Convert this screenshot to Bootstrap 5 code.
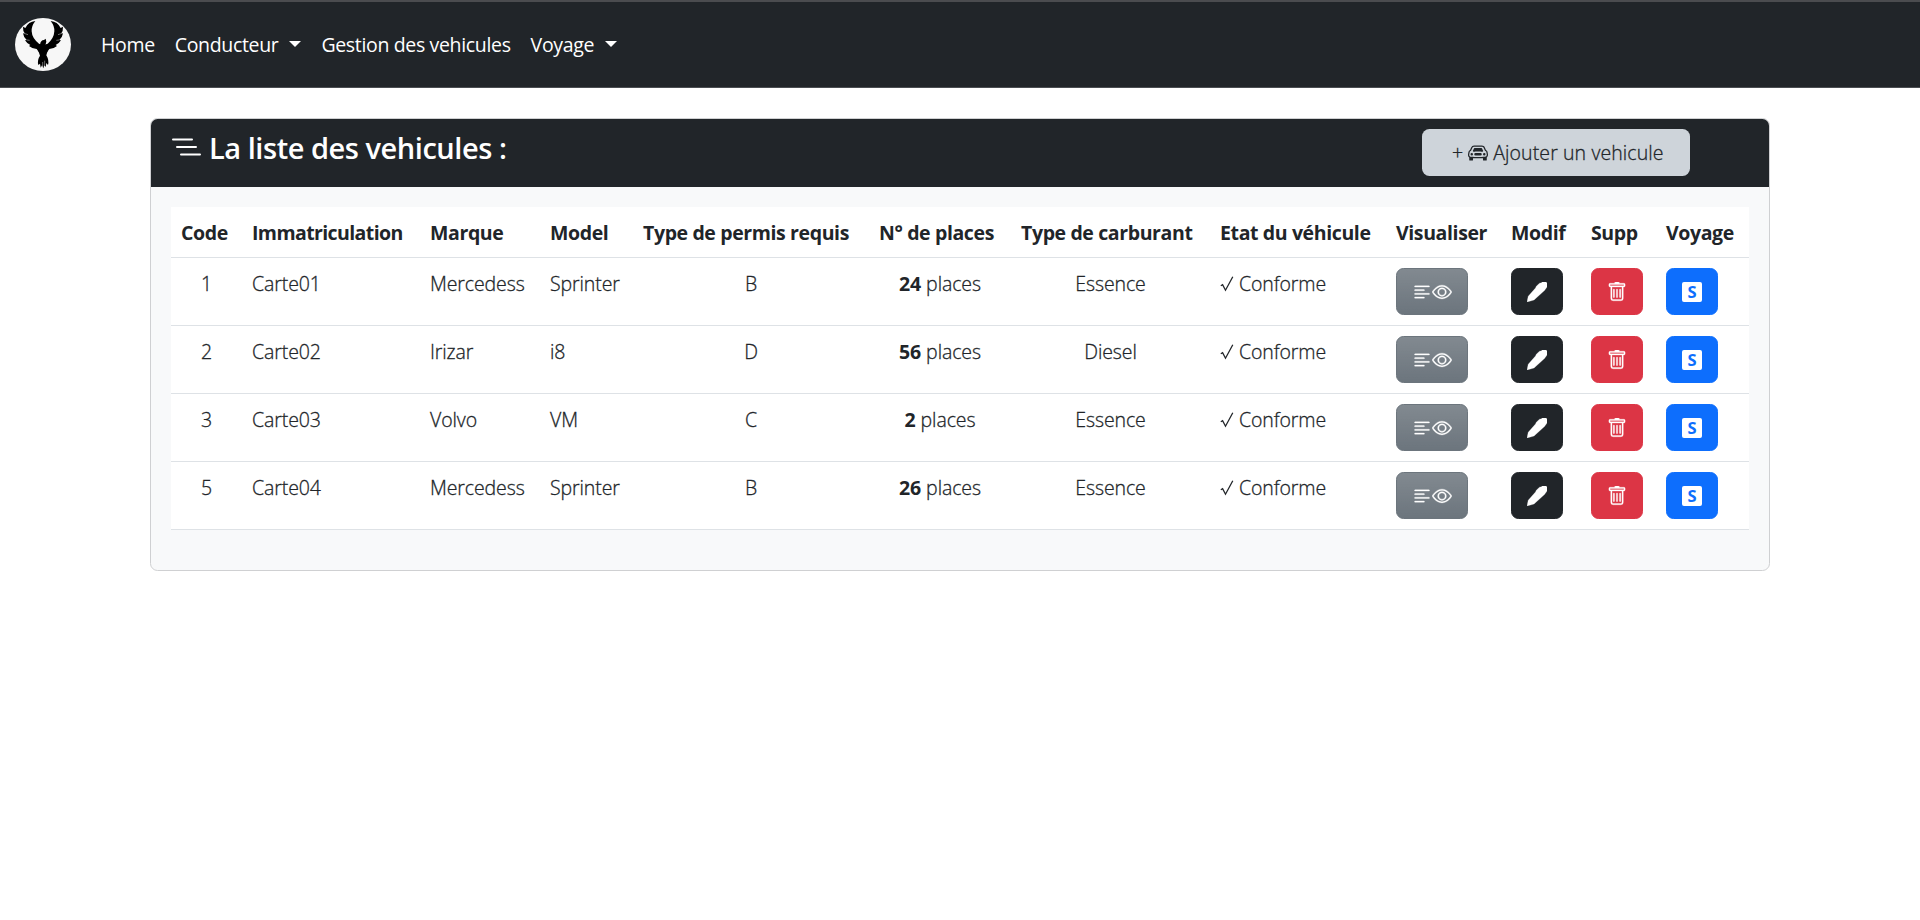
<!DOCTYPE html>
<html lang="fr">
<head>
<meta charset="utf-8">
<title>Gestion des vehicules</title>
<link href="https://cdn.jsdelivr.net/npm/bootstrap@5.3.0/dist/css/bootstrap.min.css" rel="stylesheet">
<style>
  html { font-size: 20px; }
  body { font-family: "Open Sans", "Noto Sans", sans-serif; font-size: 19.5px; line-height: 30px; background: #fff; }
  svg { display: block; flex: none; }
  .topbar { height: 88px; padding: 0 0 0 15px; border-top: 2px solid #4b4c4f; border-bottom: 1px solid #4b4e52; }
  .topbar .nav-link { padding: 10px; color: #fff; letter-spacing: -.34px; white-space: nowrap; }
  .topbar .navbar-nav { margin-left: 20px; }
  .topbar .dropdown-toggle::after { margin-left: 11px; vertical-align: 5px; border-top-width: 6px; border-left-width: 6px; border-right-width: 6px; }
  .vehicles { width: 1620px; margin: 30px auto 0; border-color: #cfd0d2; border-radius: 7.5px; background: #f8f9fa; }
  .vehicles .card-header { height: 68px; padding: 10px 20px; border-radius: 6.5px 6.5px 0 0; }
  .vehicles .card-body { padding: 20px 20px 40px; }
  .heading { font-size: 29px; line-height: 36px; font-weight: 600; letter-spacing: -.46px; padding-top: 1px; }
  .heading svg { margin: 8px 7px 0 0; }
  .add-btn { width: 268px; height: 47px; margin-right: 59px; padding: 0 0 0 30px; background: #ced4da; color: #212529; border-radius: 7.5px; font-size: 19.5px; font-weight: 300; letter-spacing: .1px; -webkit-text-stroke: .3px; }
  .list { --bs-table-bg: #fff; table-layout: fixed; width: 1578px; font-weight: 300; letter-spacing: -.1px; -webkit-text-stroke: .3px #212529; }
  .list > * > tr > * { padding: 11px 0 9px 10px; white-space: nowrap; border-color: #dee2e6; }
  .list th { font-weight: 700; letter-spacing: -.38px; -webkit-text-stroke: 0; }
  .list th:nth-child(2) { letter-spacing: -.6px; }
  .list td.mid { text-align: center; padding-left: 0; }
  .list td.act { padding-top: 10px; padding-bottom: 10px; -webkit-text-stroke: 0; }
  .list .btn { height: 47px; padding: 0 15px; border-radius: 7.5px; display: inline-flex; align-items: center; vertical-align: top; }
  .list .btn svg { stroke: currentColor; stroke-width: .25px; }
  .list .s-box { width: 20px; height: 20px; border-radius: 2px; background: #fff; color: #0d6efd; font-size: 16.5px; line-height: 20px; font-weight: 700; letter-spacing: 0; text-align: center; }
  .list b { font-weight: 700; -webkit-text-stroke: 0; }
</style>
</head>
<body>
<svg width="0" height="0" class="position-absolute" aria-hidden="true">
  <symbol id="i-lines" viewBox="0 0 16 16"><path d="M2 12.500a.5.5 0 0 1 .5-.5h7a.5.5 0 0 1 0 1h-7a.5.5 0 0 1-.5-.5m0-3a.5.5 0 0 1 .5-.5h11a.5.5 0 0 1 0 1h-11a.5.5 0 0 1-.5-.5m0-3a.5.5 0 0 1 .5-.5h7a.5.5 0 0 1 0 1h-7a.5.5 0 0 1-.5-.5m0-3a.5.5 0 0 1 .5-.5h11a.5.5 0 0 1 0 1h-11a.5.5 0 0 1-.5-.5"/></symbol>
  <symbol id="i-eye" viewBox="0 0 16 16"><path d="M16 8s-3-5.500-8-5.500S0 8 0 8s3 5.500 8 5.500S16 8 16 8M1.173 8a13 13 0 0 1 1.660-2.043C4.120 4.668 5.880 3.500 8 3.500s3.879 1.168 5.168 2.457A13 13 0 0 1 14.828 8a13 13 0 0 1-1.660 2.043C11.879 11.332 10.119 12.500 8 12.500s-3.879-1.168-5.168-2.457A13 13 0 0 1 1.172 8z"/><path d="M8 5.500a2.500 2.500 0 1 0 0 5 2.500 2.500 0 0 0 0-5M4.500 8a3.500 3.500 0 1 1 7 0 3.500 3.500 0 0 1-7 0"/></symbol>
  <symbol id="i-pen" viewBox="0 0 20 20"><path d="M0 20 1.200 14.300 8.500 6 9.300 4.200 12.500 1.200 14.500.8 15.200 0H19l1.200 1.200v3.600L17.500 8.500 7 18z"/></symbol>
  <symbol id="i-trash" viewBox="0 0 16 16"><path d="M5.500 5.500A.5.5 0 0 1 6 6v6a.5.5 0 0 1-1 0V6a.5.5 0 0 1 .5-.5m2.500 0a.5.5 0 0 1 .5.5v6a.5.5 0 0 1-1 0V6a.5.5 0 0 1 .5-.5m3 .5a.5.5 0 0 0-1 0v6a.5.5 0 0 0 1 0z"/><path d="M14.500 3a1 1 0 0 1-1 1H13v9a2 2 0 0 1-2 2H5a2 2 0 0 1-2-2V4h-.5a1 1 0 0 1-1-1V2a1 1 0 0 1 1-1H6a1 1 0 0 1 1-1h2a1 1 0 0 1 1 1h3.500a1 1 0 0 1 1 1zM4.118 4 4 4.059V13a1 1 0 0 0 1 1h6a1 1 0 0 0 1-1V4.059L11.882 4zM2.500 3h11V2h-11z"/></symbol>
  <symbol id="i-check" viewBox="0 0 14 17"><path d="M.8 9.800 2.600 8.700 5.500 14.200 12.800.8" fill="none" stroke="currentColor" stroke-width="1.300"/></symbol>
</svg>

<nav class="navbar navbar-expand bg-dark topbar">
  <a href="#" aria-label="Accueil">
    <svg width="56" height="53" viewBox="15 24 168 159">
      <ellipse cx="99" cy="103.500" rx="84" ry="79.500" fill="#f7f7f7"/>
      <path d="M76 33Q55 35 46 54L39 50Q38 62 45 71L39 70Q41 83 50 90L45 91Q51 101 61 105L57 108Q66 116 80 117L88 128 98 130 99 106 87 101Q66 85 65 64Q64 48 76 33Z"/>
      <path d="M122 33Q143 35 152 54L159 50Q160 62 153 71L159 70Q157 83 148 90L153 91Q147 101 137 105L141 108Q132 116 118 117L110 128 98 130 98 106 113 101Q132 85 133 64Q134 48 122 33Z"/>
      <path d="M90 104Q92 90 102 90L107 86 109 95 106 106 113 122 109 136Q118 151 114 165L109 159 107 171 103 165 100 175 96 166 92 173 90 161 85 165Q81 150 90 137L85 122Z"/>
      <path d="M98 156v16M104 152v13M45 71l9 3M50 90l9 1M153 71l-9 3M148 90l-9 1" stroke="#f7f7f7" stroke-width="1.300"/>
    </svg>
  </a>
  <ul class="navbar-nav">
    <li class="nav-item"><a class="nav-link" href="#">Home</a></li>
    <li class="nav-item"><a class="nav-link dropdown-toggle" href="#">Conducteur</a></li>
    <li class="nav-item"><a class="nav-link" href="#">Gestion des vehicules</a></li>
    <li class="nav-item"><a class="nav-link dropdown-toggle" href="#">Voyage</a></li>
  </ul>
</nav>

<main class="card vehicles">
  <div class="card-header bg-dark text-white d-flex align-items-start justify-content-between border-0">
    <h3 class="heading d-flex m-0">
      <svg width="31" height="18" viewBox="0 0 31 18" stroke="#fff" stroke-width="2" stroke-linecap="round"><path d="M2 1.500h19M6 9h19M10 16.500h19"/></svg>
      La liste des vehicules :
    </h3>
    <button class="btn add-btn border-0 d-flex align-items-center" type="button">
      <span>+</span>
      <svg class="ms-1 me-1" width="20" height="20" viewBox="0 0 16 16" fill="currentColor"><path d="M4 9a1 1 0 1 1-2 0 1 1 0 0 1 2 0m10 0a1 1 0 1 1-2 0 1 1 0 0 1 2 0M6 8a1 1 0 0 0 0 2h4a1 1 0 1 0 0-2zM4.862 4.276 3.906 6.190a.51.51 0 0 0 .497.731c.91-.073 2.350-.17 3.597-.17s2.688.097 3.597.17a.51.51 0 0 0 .497-.731l-.956-1.913A.5.5 0 0 0 10.691 4H5.309a.5.5 0 0 0-.447.276"/><path fill-rule="evenodd" d="M2.520 3.515A2.500 2.500 0 0 1 4.820 2h6.362c1 0 1.904.596 2.298 1.515l.792 1.848c.075.175.21.319.38.404.5.25.855.715.965 1.262l.335 1.679q.05.242.049.49v.413c0 .814-.39 1.543-1 1.997V13.500a.5.5 0 0 1-.5.5h-2a.5.5 0 0 1-.5-.5v-1.338c-1.292.048-2.745.088-4 .088s-2.708-.04-4-.088V13.500a.5.5 0 0 1-.5.5h-2a.5.5 0 0 1-.5-.5v-1.892c-.61-.454-1-1.183-1-1.997v-.413a2.500 2.500 0 0 1 .049-.49l.335-1.680c.11-.546.465-1.012.964-1.261a.8.8 0 0 0 .381-.404zM4.820 3a1.500 1.500 0 0 0-1.379.91l-.792 1.847a1.800 1.800 0 0 1-.853.904.8.8 0 0 0-.43.564L1.030 8.904a1.500 1.500 0 0 0-.03.294v.413c0 .796.62 1.448 1.408 1.484 1.555.07 3.786.155 5.592.155s4.037-.084 5.592-.155A1.480 1.480 0 0 0 15 9.611v-.413q0-.148-.03-.294l-.335-1.680a.8.8 0 0 0-.43-.563 1.800 1.800 0 0 1-.853-.904l-.792-1.848A1.500 1.500 0 0 0 11.180 3z"/></svg>
      <span>Ajouter un vehicule</span>
    </button>
  </div>
  <div class="card-body">
    <table class="table list mb-0">
      <colgroup><col width="71"><col width="178"><col width="120"><col width="93"><col width="236"><col width="142"><col width="199"><col width="176"><col width="115"><col width="80"><col width="75"><col width="93"></colgroup>
      <thead>
        <tr><th>Code</th><th>Immatriculation</th><th>Marque</th><th>Model</th><th>Type de permis requis</th><th>N° de places</th><th>Type de carburant</th><th>Etat du véhicule</th><th>Visualiser</th><th>Modif</th><th>Supp</th><th>Voyage</th></tr>
      </thead>
      <tbody id="rows"></tbody>
    </table>
  </div>
</main>

<script src="https://cdn.jsdelivr.net/npm/bootstrap@5.3.0/dist/js/bootstrap.bundle.min.js"></script>
<script>
  const vehicles = [
    [1, 'Carte01', 'Mercedess', 'Sprinter', 'B', 24, 'Essence'],
    [2, 'Carte02', 'Irizar', 'i8', 'D', 56, 'Diesel'],
    [3, 'Carte03', 'Volvo', 'VM', 'C', 2, 'Essence'],
    [5, 'Carte04', 'Mercedess', 'Sprinter', 'B', 26, 'Essence']
  ];
  const icon = n => `<svg width="20" height="20" fill="currentColor"><use href="#i-${n}"/></svg>`;
  document.getElementById('rows').innerHTML = vehicles.map(v => `<tr>
    <td class="mid">${v[0]}</td><td>${v[1]}</td><td>${v[2]}</td><td>${v[3]}</td>
    <td class="mid">${v[4]}</td><td class="mid"><b>${v[5]}</b> places</td><td class="mid">${v[6]}</td>
    <td><span class="d-flex"><svg class="mt-1 me-1" width="14" height="19"><use href="#i-check" y="1"/></svg>Conforme</span></td>
    <td class="act"><button class="btn btn-secondary bg-gradient">${icon('lines')}${icon('eye')}</button></td>
    <td class="act"><button class="btn btn-dark">${icon('pen')}</button></td>
    <td class="act"><button class="btn btn-danger">${icon('trash')}</button></td>
    <td class="act"><button class="btn btn-primary"><span class="s-box">S</span></button></td>
  </tr>`).join('');
</script>
</body>
</html>
